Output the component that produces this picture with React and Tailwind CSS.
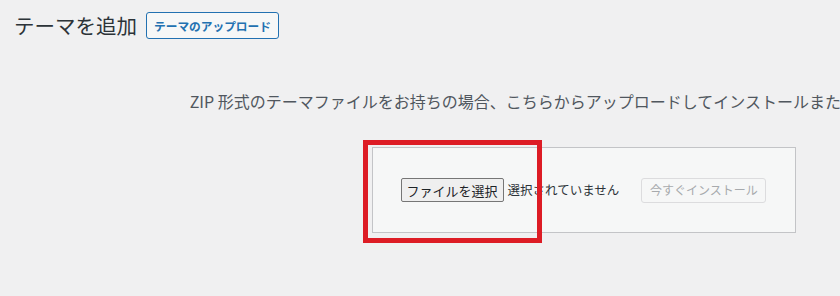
import React from 'react';

const App = () => {
  return (
    <div
      className="relative w-[840px] h-[296px] overflow-hidden bg-[#f0f0f1] text-[#1d2327]"
      style={{ fontFamily: '"Noto Sans CJK JP", "Noto Sans", sans-serif' }}
    >
      <div className="flex items-center pl-[14px] pt-[12px]">
        <h1 className="text-[20.5px] leading-[27px] font-normal text-[#2c3338]">テーマを追加</h1>
        <button className="ml-[9px] h-[27px] px-[7px] border border-[#2271b1] rounded-[3px] bg-[#f6f7f7] text-[#2271b1] text-[11.7px] font-semibold leading-none">
          テーマのアップロード
        </button>
      </div>

      <div className="w-[1167px]">
        <p className="mt-[50px] pr-[10px] text-center text-[16px] leading-[24px] whitespace-nowrap text-[#50575e]">
          ZIP 形式のテーマファイルをお持ちの場合、こちらからアップロードしてインストールまたは更新できます。
        </p>

        <div className="mx-auto mt-[34px] w-[424px] h-[86px] border border-[#c3c4c7] bg-[#f6f7f7] flex items-center pl-[28px]">
          <button className="h-[24px] w-[103px] border border-[#767676] rounded-[2px] bg-[#efefef] text-[13px] leading-none text-[#1d2327]">
            ファイルを選択
          </button>
          <span className="ml-[4px] text-[12.5px] text-[#2c3338]">選択されていません</span>
          <button
            disabled
            className="ml-[22px] h-[25px] w-[125px] border border-[#dcdcde] rounded-[3px] bg-[#f6f7f7] text-[12px] leading-none text-[#a7aaad]"
          >
            今すぐインストール
          </button>
        </div>
      </div>

      <div className="absolute left-[363px] top-[140px] w-[179px] h-[103px] border-[5px] border-[#dd1c25]" />
    </div>
  );
};

export default App;
